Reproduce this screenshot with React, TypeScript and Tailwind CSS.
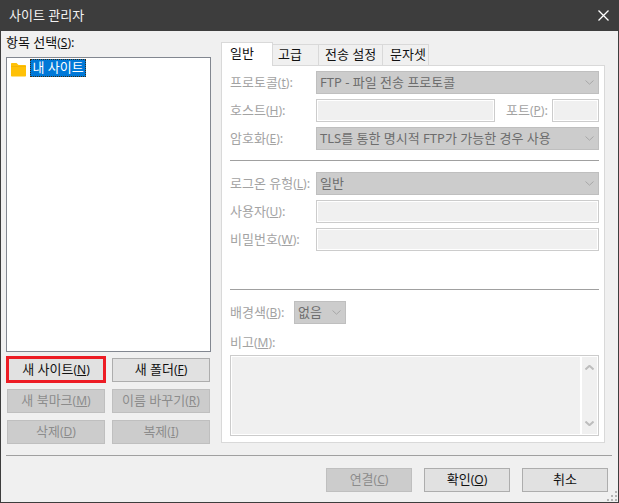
function Key({ k }: { k: string }) {
    return (
        <span className="text-[12px]">
            (<u>{k}</u>)
        </span>
    );
}

function Chevron({ up = false, stroke = "#a8a8a8", sw = 1 }: { up?: boolean; stroke?: string; sw?: number }) {
    return (
        <svg width="9" height="5" viewBox="0 0 9 5" fill="none" className="shrink-0">
            <path d={up ? "M0.5 4.5L4.5 0.8L8.5 4.5" : "M0.5 0.5L4.5 4.2L8.5 0.5"} stroke={stroke} strokeWidth={sw} />
        </svg>
    );
}

function Btn({ children, disabled = false, wide = false }: { children: React.ReactNode; disabled?: boolean; wide?: boolean }) {
    const look = disabled ? "bg-[#cccccc] border-[#bfbfbf] text-[#8c8c8c]" : "bg-[#e1e1e1] border-[#adadad] text-[#111111]";
    return (
        <div className={`h-6 ${wide ? "w-[86px]" : "w-[98px]"} border flex items-center justify-center pb-[2px] ${look}`}>
            <span>{children}</span>
        </div>
    );
}

function Select({ children, className = "" }: { children: React.ReactNode; className?: string }) {
    return (
        <div className={`h-[23px] bg-[#cccccc] border border-[#bfbfbf] flex items-center justify-between pl-[3px] pr-[4px] text-[#6d6d6d] ${className}`}>
            <span className="whitespace-nowrap pb-px">{children}</span>
            <Chevron />
        </div>
    );
}

function Input({ className = "" }: { className?: string }) {
    return <div className={`h-[23px] bg-[#f0f0f0] border border-[#cccccc] shadow-[inset_0_0_0_1px_#ffffff] ${className}`} />;
}

function Row({ label, children }: { label: React.ReactNode; children: React.ReactNode }) {
    return (
        <div className="flex items-center h-[23px]">
            <div className="w-[86px] shrink-0 text-[#a3a3a3] whitespace-nowrap pb-px">{label}</div>
            {children}
        </div>
    );
}

function Tab({ children, className = "" }: { children: React.ReactNode; className?: string }) {
    return (
        <div className={`h-[21px] bg-[#f0f0f0] border-t border-r border-[#d9d9d9] flex items-center whitespace-nowrap text-[#111111] pb-px ${className}`}>
            {children}
        </div>
    );
}

export default function App() {
    return (
        <div className="relative w-[619px] h-[503px] bg-[#f0f0f0] border-x border-b border-[#3d3d3d] flex flex-col text-[13px] leading-none font-['Noto_Sans','Noto_Sans_CJK_KR',sans-serif] overflow-hidden">
            <div className="h-[31px] shrink-0 bg-[#3d3d3d] flex items-center justify-between pl-[8px] pr-[9px] text-[#f2f2f2]">
                <span>사이트 관리자</span>
                <svg width="11" height="11" viewBox="0 0 11 11" fill="none">
                    <path d="M0.5 0.5L10.5 10.5M10.5 0.5L0.5 10.5" stroke="#ffffff" strokeWidth="1.3" />
                </svg>
            </div>

            <div className="flex h-[424px] shrink-0 pl-[5px]">
                <div className="w-[205px] shrink-0">
                    <div className="h-[26px] flex items-center text-[#111111] whitespace-nowrap pb-[3px]">
                        항목 선택<Key k="S" />:
                    </div>
                    <div className="h-[295px] bg-white border border-[#828790] pl-[4px] pt-[1px]">
                        <div className="flex items-center gap-[4px]">
                            <svg width="15" height="15" viewBox="0 0 15 15" className="shrink-0 mt-[2px]">
                                <path d="M0 2C0 1.4.4 1 1 1H5.5L7.5 3H14C14.6 3 15 3.4 15 4V13.5C15 14.1 14.6 14.5 14 14.5H1C.4 14.5 0 14.1 0 13.5Z" fill="#ffc107" />
                                <path d="M0 4.5H15V5H0Z" fill="#eda600" />
                            </svg>
                            <div className="h-[18px] w-[56px] bg-[#0078d7] border border-dotted border-[#3d2b0f] text-white flex items-center justify-center whitespace-nowrap pb-[2px]">
                                내 사이트
                            </div>
                        </div>
                    </div>
                    <div className="grid grid-cols-[98px_98px] gap-x-[7px] gap-y-[7px] mt-[6px] ml-px">
                        <div className="relative">
                            <Btn>
                                새 사이트<Key k="N" />
                            </Btn>
                            <div className="absolute -left-px -top-[2px] w-[100px] h-[27px] border-[3px] border-[#ed1c24]" />
                        </div>
                        <Btn>
                            새 폴더<Key k="F" />
                        </Btn>
                        <Btn disabled>
                            새 북마크<Key k="M" />
                        </Btn>
                        <Btn disabled>
                            이름 바꾸기<Key k="R" />
                        </Btn>
                        <Btn disabled>
                            삭제<Key k="D" />
                        </Btn>
                        <Btn disabled>
                            복제<Key k="I" />
                        </Btn>
                    </div>
                </div>

                <div className="w-[384px] ml-[10px] shrink-0 pt-[11px]">
                    <div className="flex items-end h-[23px] relative z-10">
                        <div className="w-[52px] h-[24px] -mb-px bg-white border-x border-t border-[#d9d9d9] flex items-center pl-[8px] pb-[2px] text-[#111111]">
                            일반
                        </div>
                        <Tab className="w-[46px] pl-[5px]">고급</Tab>
                        <Tab className="w-[64px] pl-[6px]">전송 설정</Tab>
                        <Tab className="w-[46px] pl-[7px]">문자셋</Tab>
                    </div>
                    <div className="h-[378px] bg-white border border-[#d9d9d9] pl-[8px] pr-[5px] pt-[5px]">
                        <div className="flex flex-col gap-[5px]">
                            <Row label={<>프로토콜<Key k="t" />:</>}>
                                <Select className="flex-1">FTP - 파일 전송 프로토콜</Select>
                            </Row>
                            <Row label={<>호스트<Key k="H" />:</>}>
                                <Input className="w-[179px]" />
                                <div className="w-[57px] pl-[11px] text-[#a3a3a3] whitespace-nowrap pb-px">
                                    포트<Key k="P" />:
                                </div>
                                <Input className="flex-1" />
                            </Row>
                            <Row label={<>암호화<Key k="E" />:</>}>
                                <Select className="flex-1">TLS를 통한 명시적 FTP가 가능한 경우 사용</Select>
                            </Row>
                        </div>
                        <div className="h-px bg-[#a0a0a0] mt-[10px] mb-[11px]" />
                        <div className="flex flex-col gap-[5px]">
                            <Row label={<>로그온 유형<Key k="L" />:</>}>
                                <Select className="flex-1">일반</Select>
                            </Row>
                            <Row label={<>사용자<Key k="U" />:</>}>
                                <Input className="flex-1" />
                            </Row>
                            <Row label={<>비밀번호<Key k="W" />:</>}>
                                <Input className="flex-1" />
                            </Row>
                        </div>
                        <div className="h-px bg-[#a0a0a0] mt-[38px] mb-[11px]" />
                        <div className="flex items-center h-[23px]">
                            <div className="w-[64px] shrink-0 text-[#a3a3a3] whitespace-nowrap pb-px">
                                배경색<Key k="B" />:
                            </div>
                            <Select className="w-[52px]">없음</Select>
                        </div>
                        <div className="h-[31px] flex items-center pt-[5px] text-[#a3a3a3]">
                            <span>
                                비고<Key k="M" />:
                            </span>
                        </div>
                        <div className="h-[81px] bg-[#f0f0f0] border border-[#cccccc] shadow-[inset_0_0_0_1px_#ffffff] flex justify-end py-px pr-px">
                            <div className="w-[17px] border-l-2 border-white bg-[#f0f0f0] flex flex-col items-center justify-between py-[8px]">
                                <Chevron up stroke="#bdbdbd" sw={2} />
                                <Chevron stroke="#bdbdbd" sw={2} />
                            </div>
                        </div>
                    </div>
                </div>
            </div>

            <div className="h-px bg-[#a0a0a0] ml-[5px] mr-[6px] shrink-0" />
            <div className="flex justify-end gap-[12px] pt-[12px] pr-[10px]">
                <Btn disabled wide>
                    연결<Key k="C" />
                </Btn>
                <Btn wide>
                    확인<Key k="O" />
                </Btn>
                <Btn wide>취소</Btn>
            </div>

            <svg width="12" height="12" viewBox="0 0 12 12" className="absolute right-0 bottom-0">
                <path d="M9 1h2v2H9zM5 5h2v2H5zM9 5h2v2H9zM1 9h2v2H1zM5 9h2v2H5zM9 9h2v2H9z" fill="#b4b4b4" />
            </svg>
        </div>
    );
}
